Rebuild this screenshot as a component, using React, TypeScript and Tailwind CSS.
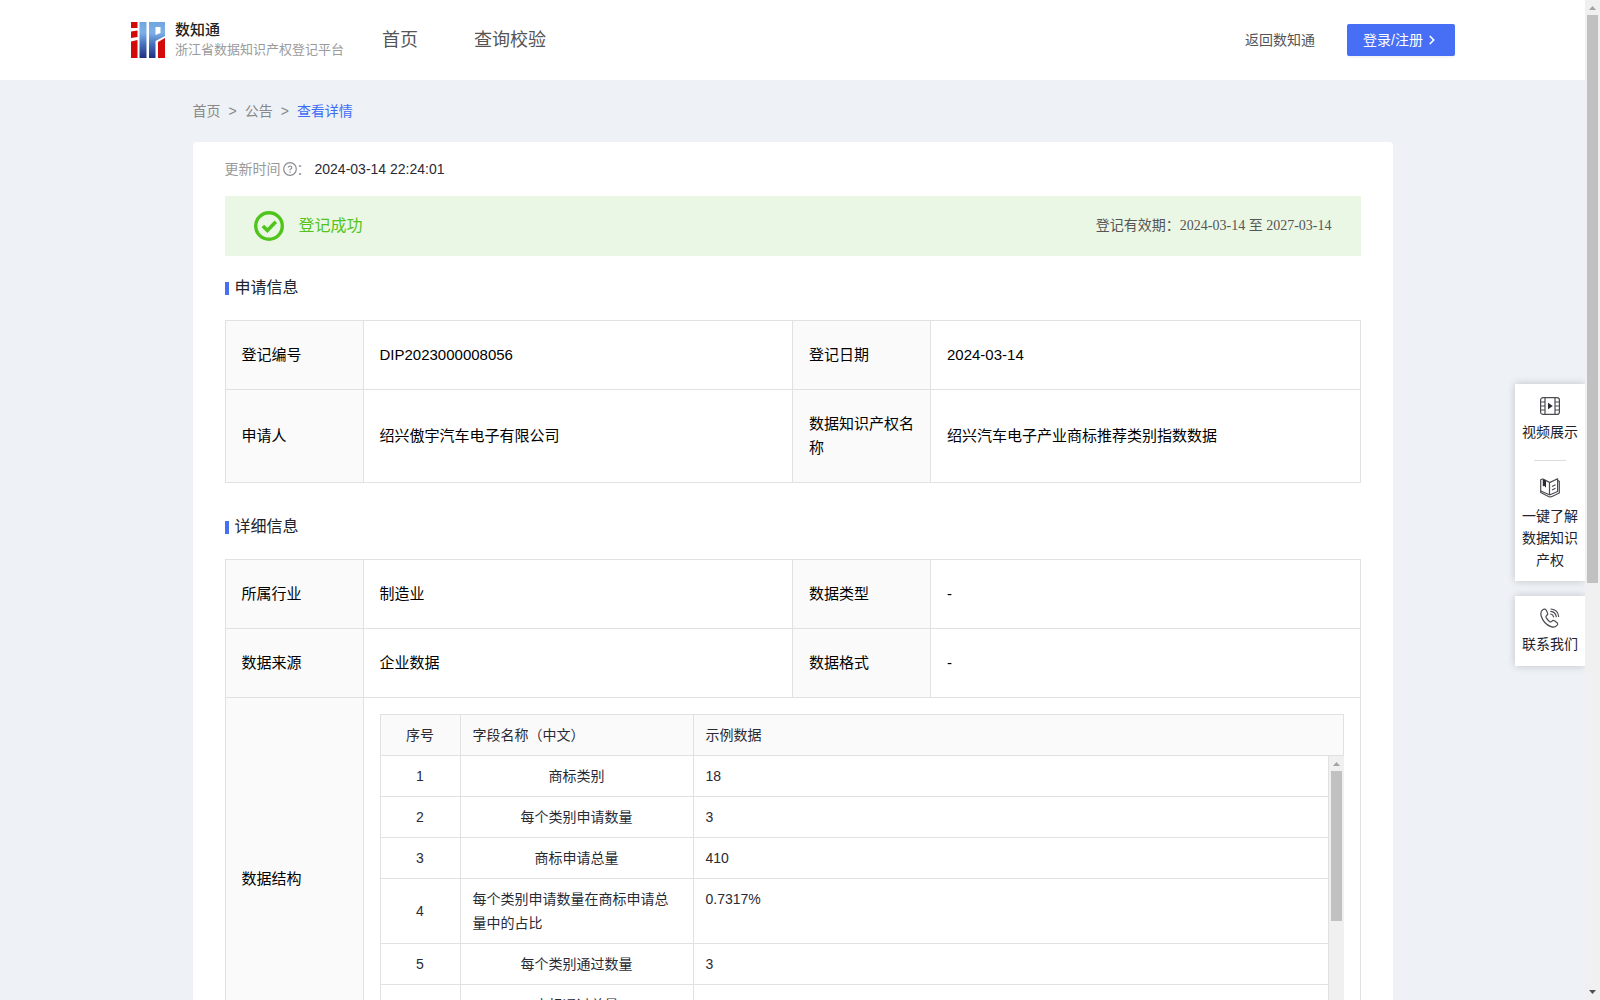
import { ChevronRight } from 'lucide-react';

interface InfoRow {
  label: string;
  value: string;
  label2: string;
  value2: string;
}

interface Field {
  name: string;
  sample: string;
}

const applyInfo: InfoRow[] = [
  { label: '登记编号', value: 'DIP2023000008056', label2: '登记日期', value2: '2024-03-14' },
  { label: '申请人', value: '绍兴傲宇汽车电子有限公司', label2: '数据知识产权名称', value2: '绍兴汽车电子产业商标推荐类别指数数据' },
];

const detailInfo: InfoRow[] = [
  { label: '所属行业', value: '制造业', label2: '数据类型', value2: '-' },
  { label: '数据来源', value: '企业数据', label2: '数据格式', value2: '-' },
];

const fields: Field[] = [
  { name: '商标类别', sample: '18' },
  { name: '每个类别申请数量', sample: '3' },
  { name: '商标申请总量', sample: '410' },
  { name: '每个类别申请数量在商标申请总量中的占比', sample: '0.7317%' },
  { name: '每个类别通过数量', sample: '3' },
  { name: '商标通过总量', sample: '291' },
];

function Logo() {
  return (
    <svg width="34" height="36" viewBox="0 0 34 36" aria-hidden="true">
      <defs>
        <linearGradient id="logoBlue" x1="0" y1="0" x2="0" y2="36" gradientUnits="userSpaceOnUse">
          <stop offset="0" stopColor="#6fa6e0" />
          <stop offset="0.3" stopColor="#7db0e6" />
          <stop offset="0.6" stopColor="#4a74bd" />
          <stop offset="1" stopColor="#1f2f80" />
        </linearGradient>
      </defs>
      <path fill="#d20a0a" d="M0 0h6.500v6H0zM0 9.500l6.500-1v6.500L0 16zM0 19.500l6.500-1.500v18H0z" />
      <path fill="url(#logoBlue)" d="M8.500 0h7v36h-7z" />
      <path fill="url(#logoBlue)" d="M18 0h16v14l-9.500 5v17H18z" />
      <path fill="#fff" d="M24.500 5h5v6l-5 2z" />
      <path fill="#d20a0a" d="M27 20l7-4v20h-7z" />
    </svg>
  );
}

function QuestionIcon() {
  return (
    <svg width="14" height="14" viewBox="0 0 14 14" fill="none" stroke="#8c8c94" aria-hidden="true">
      <circle cx="7" cy="7" r="6.300" strokeWidth="1.200" />
      <path d="M5.200 5.600a1.800 1.600 0 1 1 2.500 1.500c-.5.2-.7.500-.7 1.100" strokeWidth="1.200" />
      <path d="M7 9.500v1.200" strokeWidth="1.300" />
    </svg>
  );
}

function SuccessIcon() {
  return (
    <svg width="30" height="30" viewBox="0 0 30 30" fill="none" stroke="#4fc51c" aria-hidden="true">
      <circle cx="15" cy="15" r="13.300" strokeWidth="3.400" />
      <path d="M8.800 15l4.600 4.400 8.400-8.600" strokeWidth="3.600" />
    </svg>
  );
}

function VideoIcon() {
  return (
    <svg width="20" height="20" viewBox="0 0 20 20" fill="none" stroke="#4b4b52" strokeWidth="1.200" aria-hidden="true">
      <rect x="0.600" y="1.600" width="18.800" height="16.800" rx="2.500" />
      <path d="M5 1.600v16.800M15 1.600v16.800M.6 6h4.400M.6 10h4.400M.6 14h4.400M15 6h4.400M15 10h4.400M15 14h4.400" />
      <path d="M8 6.800v6.400l4.800-3.200z" fill="#2a2a33" stroke="none" />
    </svg>
  );
}

function BookIcon() {
  return (
    <svg width="20" height="20" viewBox="0 0 20 20" fill="none" stroke="#4b4b52" strokeWidth="1.200" strokeLinejoin="round" aria-hidden="true">
      <path d="M3 .8L.7 1.800v12.700L9.500 19l2-.3 7.800-3.700V3.200l-1.500-.6" />
      <path d="M3 1l6.500 3.400v12.400L.7 13M9.500 4.600L17.600.8v12.700L9.500 17" />
      <path d="M12 8.500l3.500-1.800M12 12l3.500-1.800" />
      <path d="M2.800 1l3.200 1.800v7L4.500 8 2.800 8.200z" fill="#2a2a33" stroke="none" />
    </svg>
  );
}

function PhoneIcon() {
  return (
    <svg width="20" height="20" viewBox="0 0 20 20" fill="none" stroke="#4b4b52" strokeWidth="1.200" strokeLinecap="round" aria-hidden="true">
      <path d="M3 1.600C1 3 .4 5.200 1.200 8c1.500 5 5.300 9 9.800 10.600 2.800 1 5 .4 6.300-1.600.6-1 .4-1.800-.5-2.500l-2.400-1.700c-.9-.6-1.700-.5-2.400.3-.9 1-1.600 1-2.600.3-1.400-1-2.400-2.300-3.200-3.800-.5-1-.3-1.700.7-2.400.9-.6 1.100-1.300.6-2.300L6.300 2.300C5.500 1 4.400.7 3 1.600z" />
      <path d="M11 1c4.200.4 7.200 3.300 7.600 7.500M10.800 3.400c3 .4 5 2.300 5.500 5.300M10.700 6c1.500.3 2.500 1.300 2.900 2.800" />
    </svg>
  );
}

function ScrollArrow({ down = false, color }: { down?: boolean; color: string }) {
  return (
    <svg width="15" height="15" viewBox="0 0 15 15" fill={color} className="block shrink-0" aria-hidden="true">
      <path d={down ? 'M4 5h7L7.500 9z' : 'M4 10h7L7.500 6z'} />
    </svg>
  );
}

function SectionTitle({ children }: { children: string }) {
  return (
    <h2 className="flex items-center gap-1.5 text-base leading-6 text-[#22222c]">
      <span className="h-[13px] w-1 bg-[#466ff5]" />
      {children}
    </h2>
  );
}

function Columns() {
  return (
    <colgroup>
      <col className="w-[138px]" />
      <col />
      <col className="w-[138px]" />
      <col />
    </colgroup>
  );
}

const labelCell = 'border border-[#e1e1e1] bg-[#fafafa] px-4 text-left font-normal';
const valueCell = 'border border-[#e1e1e1] px-4';

function InfoRows({ rows }: { rows: InfoRow[] }) {
  return (
    <>
      {rows.map((row) => (
        <tr key={row.label}>
          <th scope="row" className={`${labelCell} py-[22px]`}>{row.label}</th>
          <td className={valueCell}>{row.value}</td>
          <th scope="row" className={`${labelCell} py-[22px]`}>{row.label2}</th>
          <td className={valueCell}>{row.value2}</td>
        </tr>
      ))}
    </>
  );
}

function FieldTable() {
  return (
    <div className="text-sm leading-6 text-[#2a2a35]">
      {/* Header stays put while the body scrolls */}
      <div className="grid grid-cols-[80px_233px_1fr] border border-[#e1e1e1] bg-[#fafafa]">
        <div className="border-r border-[#e1e1e1] px-3 py-2 text-center">序号</div>
        <div className="border-r border-[#e1e1e1] px-3 py-2">字段名称（中文）</div>
        <div className="px-3 py-2">示例数据</div>
      </div>
      <div className="flex h-[288px]">
        <div className="min-w-0 flex-1 overflow-y-auto [scrollbar-width:none]">
          <table className="w-full table-fixed border-separate border-spacing-0 border-l border-[#e1e1e1]">
            <colgroup>
              <col className="w-20" />
              <col className="w-[233px]" />
              <col />
            </colgroup>
            <tbody>
              {fields.map((field, i) => (
                <tr key={field.name}>
                  <td className="border-r border-b border-[#e1e1e1] px-3 py-2 text-center">{i + 1}</td>
                  <td className="border-r border-b border-[#e1e1e1] px-3 py-2">
                    <div className="mx-auto w-fit">{field.name}</div>
                  </td>
                  <td className="border-r border-b border-[#e1e1e1] px-3 py-2 align-top">{field.sample}</td>
                </tr>
              ))}
            </tbody>
          </table>
        </div>
        <div className="flex w-[15px] flex-col bg-[#f0f0f0]">
          <ScrollArrow color="#a3a3a3" />
          <div className="mx-0.5 h-[150px] bg-[#c1c1c1]" />
        </div>
      </div>
    </div>
  );
}

function SideTools() {
  return (
    <aside className="absolute top-[384px] right-0 flex w-[70px] flex-col gap-[15px] text-center text-sm leading-[22px] text-[#22222c]">
      <div className="flex flex-col items-center bg-white px-1.5 pt-3 pb-2.5 shadow-[0_0_8px_rgba(0,0,0,0.2)]">
        <a href="#video" className="flex flex-col items-center gap-[5px]">
          <VideoIcon />
          <span>视频展示</span>
        </a>
        <span className="my-[17px] h-px w-8 bg-[#dcdcdc]" />
        <a href="#guide" className="flex flex-col items-center gap-[7px]">
          <BookIcon />
          <span>一键了解数据知识产权</span>
        </a>
      </div>
      <a href="#contact" className="flex flex-col items-center gap-[5px] bg-white pt-3 pb-[11px] shadow-[0_0_8px_rgba(0,0,0,0.2)]">
        <PhoneIcon />
        <span>联系我们</span>
      </a>
    </aside>
  );
}

export default function App() {
  return (
    <div className="relative flex h-screen bg-[#eef2f6] font-['Liberation_Sans','Noto_Sans_CJK_SC',sans-serif]">
      <div className="min-w-0 flex-1 overflow-y-auto [scrollbar-width:none]">
        {/* Header */}
        <header className="flex h-20 items-center bg-white pr-[130px] pl-[131px]">
          <a href="#home" className="flex items-center gap-[10px]">
            <Logo />
            <span className="flex flex-col">
              <span className="text-[15px] leading-5 font-medium text-[#222]">数知通</span>
              <span className="text-[13px] leading-5 text-[#9b9b9b]">浙江省数据知识产权登记平台</span>
            </span>
          </a>
          <nav className="ml-[38px] flex gap-14 text-lg text-[#555]">
            <a href="#index">首页</a>
            <a href="#verify">查询校验</a>
          </nav>
          <div className="ml-auto flex items-center gap-8 text-sm">
            <a href="#back" className="text-[#555]">返回数知通</a>
            <button type="button" className="flex h-8 items-center gap-0.5 rounded-xs bg-[#466ff5] px-4 text-white shadow-[0_2px_0_rgba(0,0,0,0.04)]">
              登录/注册
              <ChevronRight size={14} strokeWidth={3} />
            </button>
          </div>
        </header>

        <main className="mx-auto max-w-[1200px]">
          {/* Breadcrumb */}
          <nav className="flex gap-2 py-5 text-sm leading-[22px] text-[#888]">
            <a href="#index">首页</a>
            <span>&gt;</span>
            <a href="#notice">公告</a>
            <span>&gt;</span>
            <span className="text-[#3d6df5]">查看详情</span>
          </nav>

          <div className="rounded-t bg-white px-8 pt-4 pb-8">
            <div className="flex items-center text-sm leading-[22px] text-[#999]">
              <span className="mr-0.5">更新时间</span>
              <QuestionIcon />
              <span>：</span>
              <span className="ml-1 text-[#2a2a35]">2024-03-14 22:24:01</span>
            </div>

            <div className="mt-4 mb-5 flex h-[60px] items-center bg-[#ebf7e5] px-[29px]">
              <SuccessIcon />
              <span className="ml-[15px] text-base text-[#52c41a]">登记成功</span>
              <span className="ml-auto font-['Liberation_Serif','Noto_Sans_CJK_SC',serif] text-sm text-[#555]">
                登记有效期：2024-03-14 至 2027-03-14
              </span>
            </div>

            <SectionTitle>申请信息</SectionTitle>
            <table className="mt-5 mb-8 w-full table-fixed border-collapse text-[15px] leading-6 text-black">
              <Columns />
              <tbody>
                <InfoRows rows={applyInfo} />
              </tbody>
            </table>

            <SectionTitle>详细信息</SectionTitle>
            <table className="mt-5 w-full table-fixed border-collapse text-[15px] leading-6 text-black">
              <Columns />
              <tbody>
                <InfoRows rows={detailInfo} />
                <tr>
                  <th scope="row" className={labelCell}>数据结构</th>
                  <td colSpan={3} className={`${valueCell} py-4`}>
                    <FieldTable />
                  </td>
                </tr>
              </tbody>
            </table>
          </div>
        </main>
      </div>

      {/* Page scrollbar */}
      <div className="flex w-[15px] flex-col bg-[#f0f0f0]">
        <ScrollArrow color="#a3a3a3" />
        <div className="flex-1">
          <div className="mx-0.5 h-[58.6%] bg-[#c1c1c1]" />
        </div>
        <ScrollArrow down color="#505050" />
      </div>
      <div className="absolute inset-y-0 right-[15px] w-[80px] overflow-hidden">
        <SideTools />
      </div>
    </div>
  );
}
